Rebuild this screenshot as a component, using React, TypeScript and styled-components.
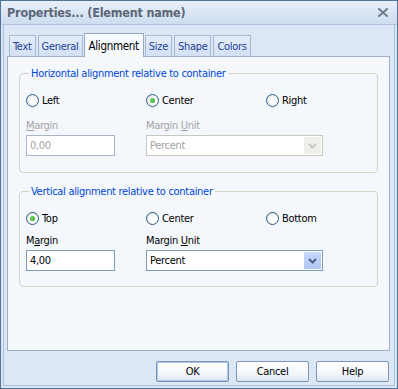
import styled, { createGlobalStyle, css } from "styled-components";

const FONT = `"DejaVu Sans Condensed", "DejaVu Sans", "Liberation Sans", sans-serif`;

const GlobalStyle = createGlobalStyle`
  html, body {
    margin: 0;
    padding: 0;
    background: #ffffff;
  }
  * {
    box-sizing: border-box;
  }
`;

const Window = styled.div`
  width: 398px;
  height: 389px;
  display: flex;
  flex-direction: column;
  background: #dce7f5;
  border: 1px solid #54739a;
  font-family: ${FONT};
  font-size: 11px;
  letter-spacing: -0.3px;
  color: #000;
`;

const TitleBar = styled.div`
  flex: none;
  height: 24px;
  display: flex;
  align-items: center;
  justify-content: space-between;
  padding: 0 9px 0 6px;
  background: linear-gradient(#e8eff9, #cddcf0);
  border-bottom: 1px solid #aec3df;
`;

const Title = styled.div`
  font-size: 12.5px;
  font-weight: bold;
  color: #5b6677;
  letter-spacing: -0.2px;
`;

const Body = styled.div`
  flex: 1;
  display: flex;
  flex-direction: column;
  margin: 0 2px 2px;
  padding: 8px 4px 3px 3px;
  border: 1px solid #a9c0df;
  border-top: none;
`;

const TabStrip = styled.div`
  height: 23px;
  display: flex;
  align-items: flex-end;
  padding-left: 2px;
  gap: 2px;
`;

const Tab = styled.div<{ $active?: boolean }>`
  height: 21px;
  padding: 0 3px;
  display: flex;
  align-items: center;
  border: 1px solid #a7b9d3;
  border-bottom: none;
  background: linear-gradient(#e4edf9, #d3e0f3);
  color: #1d4296;
  white-space: nowrap;

  ${({ $active }) =>
    $active &&
    css`
      height: 24px;
      margin: 0 -1px -1px;
      padding: 0 4px;
      position: relative;
      z-index: 1;
      border-color: #98a8be;
      background: #f7fafd;
      color: #000;
      font-size: 11.5px;
    `}
`;

const TabPanel = styled.div`
  flex: 1;
  display: flex;
  flex-direction: column;
  gap: 12px;
  padding: 10px 11px 0;
  background: #f4f8fd;
  border: 1px solid #9fb0c6;
`;

const Group = styled.fieldset<{ $compact?: boolean }>`
  margin: 0;
  padding: 12px 6px ${({ $compact }) => ($compact ? 15 : 16)}px;
  border: 1px solid #d3d3c6;
  border-radius: 4px;
  display: flex;
  flex-direction: column;
  gap: ${({ $compact }) => ($compact ? 8 : 11)}px;
`;

const Legend = styled.legend`
  margin-left: 3px;
  padding: 0 2px;
  line-height: 13px;
  color: #0046d5;
`;

const Row = styled.div`
  display: grid;
  grid-template-columns: 120px 120px 1fr;
  align-items: center;
`;

const RadioLabel = styled.label`
  display: flex;
  align-items: center;
  gap: 3px;
  height: 16px;
`;

const RadioCircle = styled.span<{ $checked?: boolean }>`
  width: 13px;
  height: 13px;
  border-radius: 50%;
  border: 1px solid #2b5a8a;
  background: radial-gradient(circle at 60% 60%, #ffffff 30%, #dcdcd6 100%);
  display: flex;
  align-items: center;
  justify-content: center;

  &::after {
    content: "";
    width: 5px;
    height: 5px;
    border-radius: 50%;
    background: radial-gradient(circle at 40% 40%, #6fdc5f, #1f9a1f);
    display: ${({ $checked }) => ($checked ? "block" : "none")};
  }
`;

const Field = styled.div`
  display: flex;
  flex-direction: column;
  gap: 3px;
`;

const FieldLabel = styled.span<{ $disabled?: boolean }>`
  line-height: 13px;
  color: ${({ $disabled }) => ($disabled ? "#a3a3a3" : "#000")};

  u {
    text-decoration-thickness: 1px;
  }
`;

const TextBox = styled.div<{ $disabled?: boolean; $width: number }>`
  width: ${({ $width }) => $width}px;
  height: 21px;
  display: flex;
  align-items: center;
  padding: 0 3px;
  background: #ffffff;
  border: 1px solid ${({ $disabled }) => ($disabled ? "#a9b6c7" : "#7f9db9")};
  color: ${({ $disabled }) => ($disabled ? "#a3a3a3" : "#000")};
`;

const SelectBox = styled(TextBox)`
  justify-content: space-between;
  padding: 0 1px 0 3px;
  border-color: ${({ $disabled }) => ($disabled ? "#c9c9c0" : "#7f9db9")};
`;

const DropButton = styled.span<{ $disabled?: boolean }>`
  width: 17px;
  height: 17px;
  display: flex;
  align-items: center;
  justify-content: center;
  background: ${({ $disabled }) =>
    $disabled ? "#efefe9" : "linear-gradient(#c8d8fb, #b1c6f4)"};
`;

const ButtonRow = styled.div`
  display: flex;
  justify-content: flex-end;
  gap: 7px;
  margin-top: 10px;
  padding-right: 1px;
`;

const Button = styled.button<{ $focused?: boolean }>`
  width: 73px;
  height: 21px;
  margin: 0;
  padding: 0;
  font-family: ${FONT};
  font-size: 11px;
  letter-spacing: -0.3px;
  color: #000;
  border: 1px solid #7d95b5;
  border-radius: 2px;
  background: linear-gradient(#ffffff, #f3f6fb 60%, #dde5f1);
  box-shadow: ${({ $focused }) => ($focused ? "inset 0 0 0 1px #a9c6ee" : "none")};
`;

const CloseIcon = () => (
  <svg width="10" height="9" viewBox="0 0 10 9">
    <path d="M1 1 L9 8 M9 1 L1 8" stroke="#707e92" strokeWidth="2" strokeLinecap="square" />
  </svg>
);

const Chevron = ({ disabled }: { disabled?: boolean }) => (
  <svg width="9" height="6" viewBox="0 0 9 6">
    <path
      d="M1 1 L4.5 4.5 L8 1"
      fill="none"
      stroke={disabled ? "#c9c9c2" : "#4a5e86"}
      strokeWidth="2"
    />
  </svg>
);

const Radio = ({ label, checked }: { label: string; checked?: boolean }) => (
  <RadioLabel>
    <RadioCircle $checked={checked} />
    {label}
  </RadioLabel>
);

type GroupProps = {
  title: string;
  options: string[];
  selected: number;
  value: string;
  disabled?: boolean;
  compact?: boolean;
  marginKey: number;
};

const AlignmentGroup = ({ title, options, selected, value, disabled, compact, marginKey }: GroupProps) => (
  <Group $compact={compact}>
    <Legend>{title}</Legend>
    <Row>
      {options.map((o, i) => (
        <Radio key={o} label={o} checked={i === selected} />
      ))}
    </Row>
    <Row>
      <Field>
        <FieldLabel $disabled={disabled}>
          {"Margin".slice(0, marginKey)}
          <u>{"Margin"[marginKey]}</u>
          {"Margin".slice(marginKey + 1)}
        </FieldLabel>
        <TextBox $disabled={disabled} $width={89}>
          {value}
        </TextBox>
      </Field>
      <Field>
        <FieldLabel $disabled={disabled}>
          Margin <u>U</u>nit
        </FieldLabel>
        <SelectBox $disabled={disabled} $width={177}>
          Percent
          <DropButton $disabled={disabled}>
            <Chevron disabled={disabled} />
          </DropButton>
        </SelectBox>
      </Field>
    </Row>
  </Group>
);

const tabs = ["Text", "General", "Alignment", "Size", "Shape", "Colors"];

const App = () => (
  <>
    <GlobalStyle />
    <Window>
      <TitleBar>
        <Title>Properties... (Element name)</Title>
        <CloseIcon />
      </TitleBar>
      <Body>
        <TabStrip>
          {tabs.map((t) => (
            <Tab key={t} $active={t === "Alignment"}>
              {t}
            </Tab>
          ))}
        </TabStrip>
        <TabPanel>
          <AlignmentGroup
            title="Horizontal alignment relative to container"
            options={["Left", "Center", "Right"]}
            selected={1}
            value="0,00"
            disabled
            marginKey={0}
          />
          <AlignmentGroup
            title="Vertical alignment relative to container"
            options={["Top", "Center", "Bottom"]}
            selected={0}
            value="4,00"
            compact
            marginKey={1}
          />
        </TabPanel>
        <ButtonRow>
          <Button $focused>OK</Button>
          <Button>Cancel</Button>
          <Button>Help</Button>
        </ButtonRow>
      </Body>
    </Window>
  </>
);

export default App;
